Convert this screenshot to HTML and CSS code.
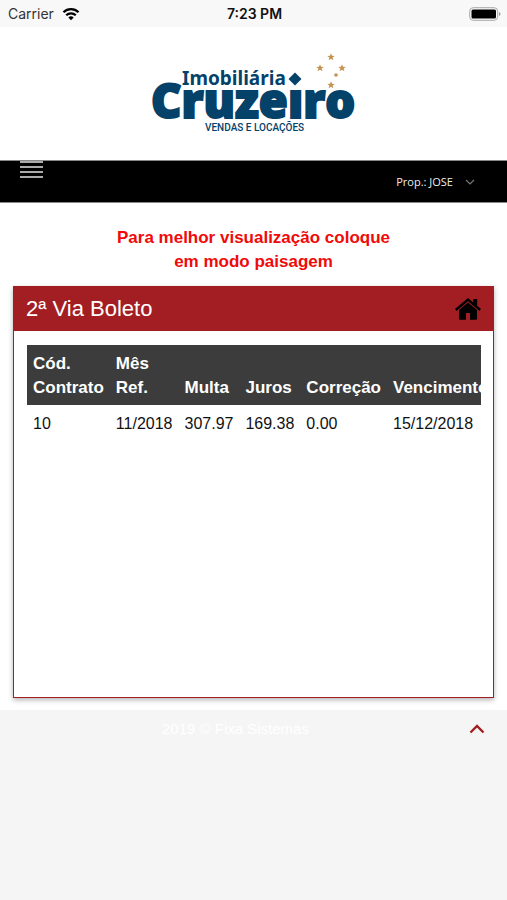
FILE: index.html
```html
<!DOCTYPE html>
<html lang="pt-br">

<head>
    <meta charset="UTF-8">
    <meta name="viewport" content="width=device-width, initial-scale=1.0">
    <title>2ª Via Boleto</title>

    <link rel="stylesheet" href="styles.css">
</head>

<body>
    <div class="status">
        <div class="carrier">
            Carrier
            <svg width="18" height="14" viewBox="0 0 18 14">
                <g fill="none" stroke="#000" stroke-width="2.300">
                    <path d="M1.500 5.200a10.600 10.600 0 0 1 15 0" />
                    <path d="M4.200 8.300a6.800 6.800 0 0 1 9.600 0" />
                </g>
                <path d="M9 13.200l-2.700-2.700a3.800 3.800 0 0 1 5.400 0z" />
            </svg>
        </div>
        <div class="time">7:23 PM</div>
        <div class="battery">
            <svg width="32" height="14" viewBox="0 0 32 14">
                <rect x="0.700" y="0.700" width="28" height="12.600" rx="3.500" fill="none" stroke="#a8a8a8" />
                <rect x="2.500" y="2.500" width="24.500" height="9" rx="1.500" />
                <path d="M30 5v4q1.500-.5 1.500-2T30 5z" fill="#999" />
            </svg>
        </div>
    </div>

    <header class="top">
        <svg class="logo" width="208" height="84" viewBox="0 0 208 84" role="img" aria-label="Imobiliária Cruzeiro">
            <text class="logo-small" x="32" y="35">Imobiliária</text>
            <!-- i sem pingo, o losango faz o pingo -->
            <text class="logo-big" x="1" y="68">Cruzeıro</text>
            <text class="logo-sub" x="55" y="81">VENDAS E LOCAÇÕES</text>
            <path d="M145 22.500l6.500 6.500-6.500 6.500-6.500-6.500z" fill="#04426a" />
            <defs>
                <path id="star" d="M0-3.800L1-1.200 3.800-1.100 1.600.6 2.400 3.300 0 1.700-2.400 3.300-1.600.6-3.800-1.100-1-1.200z" />
            </defs>
            <g fill="#c4924f">
                <use href="#star" x="181" y="7" />
                <use href="#star" x="170" y="18" />
                <use href="#star" x="192" y="18" />
                <use href="#star" x="181" y="35" />
                <circle cx="186" cy="25" r="1.800" />
            </g>
        </svg>
    </header>

    <nav class="navbar">
        <button class="menu-btn" type="button" aria-label="Menu">
            <span></span>
            <span></span>
            <span></span>
            <span></span>
        </button>
        <button class="user-btn" type="button">
            Prop.: JOSE
            <svg width="10" height="6" viewBox="0 0 10 6">
                <path d="M1 1l4 4 4-4" fill="none" stroke="#777" stroke-width="1.200" />
            </svg>
        </button>
    </nav>

    <main class="content">
        <p class="aviso">Para melhor visualização coloque<br>em modo paisagem</p>

        <section class="box">
            <div class="box-title">
                <h1>2ª Via Boleto</h1>
                <a href="#" aria-label="Início">
                    <svg width="26" height="22" viewBox="0 0 26 22">
                        <path d="M13 0L0 11l1.600 1.900L13 3.300l11.400 9.600L26 11l-3.800-3.200V1h-4v3.400z" />
                        <path d="M13 4.500L4 12.100V21q0 .8.800.8H11V15h4v6.800h6.200q.8 0 .8-.8v-8.900z" />
                    </svg>
                </a>
            </div>
            <div class="box-body">
                <div class="scroll">
                    <table>
                        <thead>
                            <tr>
                                <th>Cód.<br>Contrato</th>
                                <th>Mês<br>Ref.</th>
                                <th>Multa</th>
                                <th>Juros</th>
                                <th>Correção</th>
                                <th>Vencimento</th>
                            </tr>
                        </thead>
                        <tbody>
                            <tr>
                                <td>10</td>
                                <td>11/2018</td>
                                <td>307.97</td>
                                <td>169.38</td>
                                <td>0.00</td>
                                <td>15/12/2018</td>
                            </tr>
                        </tbody>
                    </table>
                </div>
            </div>
        </section>
    </main>

    <footer class="footer">
        <span class="copy">2019 © Fixa Sistemas</span>
        <a class="go-top" href="#" aria-label="Topo">
            <svg width="16" height="10" viewBox="0 0 16 10">
                <path d="M1.500 8.500L8 2l6.500 6.500" fill="none" stroke="#a31e22" stroke-width="2.400" />
            </svg>
        </a>
    </footer>
</body>

</html>
```
FILE: styles.css
```css
* {
    box-sizing: border-box;
}

body {
    margin: 0;
    min-height: 100vh;
    display: flex;
    flex-direction: column;
    background-color: #f5f5f5;
    font-family: "Liberation Sans", Arial, sans-serif;
    font-size: 16px;
    line-height: 24px;
    color: #111;
}

svg {
    display: block;
}

button {
    padding: 0;
    border: 0;
    background: none;
    cursor: pointer;
}

/* barra do celular */
.status {
    display: grid;
    grid-template-columns: 1fr auto 1fr;
    align-items: center;
    height: 27px;
    padding: 0 6px 0 8px;
    background-color: #f8f8f8;
    font-family: Inter, sans-serif;
    font-size: 14px;
}

.carrier {
    display: flex;
    align-items: center;
    gap: 8px;
    color: #333;
}

.time {
    font-weight: 600;
}

.battery {
    justify-self: end;
}

.top {
    display: flex;
    justify-content: center;
    padding: 23px 0 26px;
    background-color: #fff;
}

.logo {
    overflow: visible;
}

.logo text {
    fill: #04426a;
}

.logo-small {
    font-family: "Noto Sans", sans-serif;
    font-size: 19px;
    font-weight: 700;
}

.logo-big {
    font-family: "Open Sans", sans-serif;
    font-size: 47px;
    font-weight: 800;
    stroke: #04426a;
    stroke-width: 2px;
}

.logo-sub {
    font-family: Roboto, sans-serif;
    font-size: 10px;
    font-weight: 500;
}

.navbar {
    display: flex;
    justify-content: space-between;
    align-items: flex-start;
    height: 43px;
    padding: 0 32px 0 20px;
    border-top: 1px solid #888;
    border-bottom: 1px solid #888;
    background-color: #000;
}

.menu-btn {
    display: grid;
    gap: 3px;
    width: 23px;
}

.menu-btn span {
    height: 2px;
    background-color: #aaa;
}

.user-btn {
    display: flex;
    align-items: center;
    gap: 12px;
    height: 41px;
    font-family: "Open Sans", sans-serif;
    font-size: 11px;
    color: #eee;
}

.content {
    padding: 23px 13px 12px;
    background-color: #fff;
}

.aviso {
    margin: 0 0 12px;
    font-size: 17px;
    font-weight: bold;
    text-align: center;
    color: #f00a0a;
}

.box {
    border: 1px solid #a31e22;
    box-shadow: 0 2px 5px rgba(0, 0, 0, 30%);
}

.box-title {
    display: flex;
    justify-content: space-between;
    align-items: center;
    height: 44px;
    padding: 0 12px;
    background-color: #a31e22;
}

.box-title h1 {
    margin: 0;
    font-size: 22px;
    font-weight: normal;
    color: #fff;
}

.box-body {
    min-height: 366px;
    padding: 14px 12px 14px 13px;
}

.scroll {
    overflow: hidden;
}

table {
    border-collapse: collapse;
    white-space: nowrap;
}

th,
td {
    padding: 7px 6px 5px;
    text-align: left;
    vertical-align: bottom;
}

th {
    background-color: #3c3c3c;
    color: #fff;
    font-size: 17px;
}

.footer {
    display: flex;
    align-items: center;
    gap: 20px;
    padding: 7px 22px;
}

.copy {
    flex: 1;
    font-size: 15px;
    text-align: center;
    color: #fff;
}
```
